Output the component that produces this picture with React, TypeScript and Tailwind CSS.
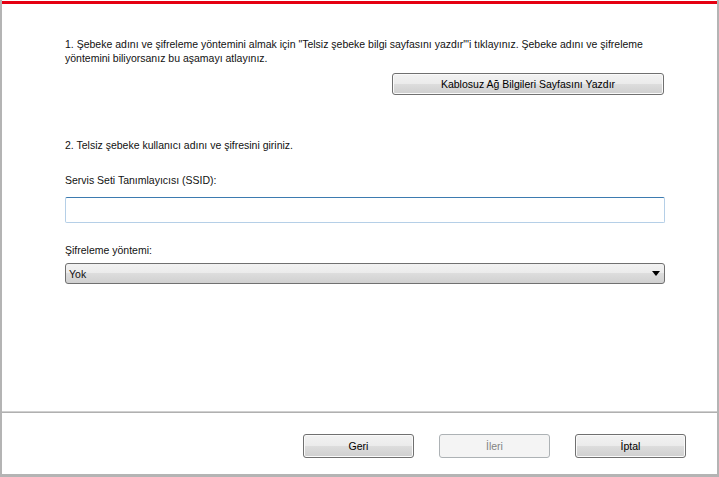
import React from "react";

const btn =
  "h-[24px] w-[111px] rounded-[3px] border border-[#707070] bg-[linear-gradient(#f2f2f2_0%,#ebebeb_50%,#dddddd_50%,#cfcfcf_100%)] shadow-[inset_0_0_0_1px_#fafafa] text-[10.5px] text-black flex items-center justify-center";

export default function App() {
  return (
    <div
      className="w-[719px] h-[477px] bg-white flex flex-col border-l-2 border-r-2 border-b-[3px] border-[#b4b4b4] text-[10.5px] leading-[14px] text-[#111]"
      style={{ fontFamily: '"Liberation Sans", Arial, sans-serif' }}
    >
      <div className="pt-[1px]">
        <div className="h-[3px] bg-[#e50012]" />
      </div>
      <div className="flex-1 flex flex-col ml-[63px] w-[600px]">
        <p className="mt-[33px] whitespace-nowrap">
          1. Şebeke adını ve şifreleme yöntemini almak için "Telsiz şebeke bilgi sayfasını yazdır"'i tıklayınız. Şebeke adını ve şifreleme
          <br />
          yöntemini biliyorsanız bu aşamayı atlayınız.
        </p>
        <div className="mt-[8px] flex justify-end pr-[1px]">
          <button className="h-[22px] w-[272px] rounded-[3px] border border-[#707070] bg-[linear-gradient(#f2f2f2_0%,#ebebeb_50%,#dddddd_50%,#cfcfcf_100%)] shadow-[inset_0_0_0_1px_#fafafa] text-[10.5px] text-black flex items-center justify-center">
            Kablosuz Ağ Bilgileri Sayfasını Yazdır
          </button>
        </div>
        <p className="mt-[43px] whitespace-nowrap">2. Telsiz şebeke kullanıcı adını ve şifresini giriniz.</p>
        <p className="mt-[21px] whitespace-nowrap">Servis Seti Tanımlayıcısı (SSID):</p>
        <div className="mt-[10px] h-[26px] rounded-[2px] border border-[#b5cfe7] border-t-[#3d7bb0] bg-white" />
        <p className="mt-[20px] whitespace-nowrap">Şifreleme yöntemi:</p>
        <div className="mt-[6px] h-[21px] rounded-[3px] border border-[#707070] bg-[linear-gradient(#f2f2f2_0%,#ebebeb_50%,#dddddd_50%,#d0d0d0_100%)] flex items-center justify-between pl-[3px] pr-[4px]">
          <span>Yok</span>
          <svg width="8" height="5" viewBox="0 0 8 5">
            <path d="M0 0 H8 L4 5 Z" fill="#000" />
          </svg>
        </div>
      </div>
      <div className="h-[2px] border-t border-[#d0d0d0] border-b border-b-[#b0b0b0]" />
      <div className="h-[61px] flex justify-end items-start pt-[21px] pr-[31px] gap-[25px]">
        <button className={btn}>Geri</button>
        <button className="h-[24px] w-[111px] rounded-[3px] border border-[#adb2b5] bg-[#f4f4f4] text-[10.5px] text-[#838383] flex items-center justify-center">
          İleri
        </button>
        <button className={btn}>İptal</button>
      </div>
    </div>
  );
}
